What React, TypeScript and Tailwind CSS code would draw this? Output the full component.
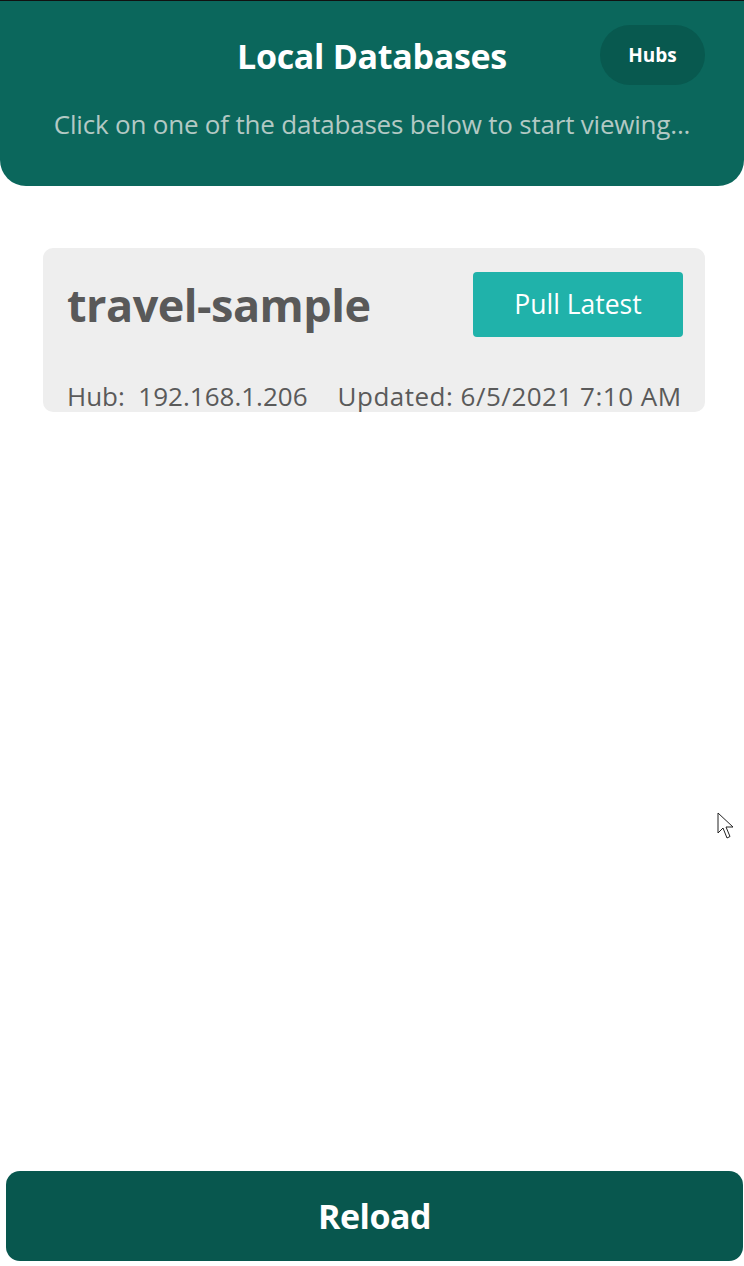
const font = { fontFamily: '"Open Sans", "Noto Sans", sans-serif' };

function Cursor() {
  return (
    <svg className="absolute left-[717px] top-[812px]" width="20" height="28" viewBox="0 0 20 28">
      <path d="M1 1 L1 21 L6 16 L10 26 L13 24.5 L9 15 L16 15 Z" fill="white" stroke="#222" strokeWidth="1" strokeLinejoin="round" />
    </svg>
  );
}

export default function App() {
  return (
    <div className="relative flex h-[1266px] w-[744px] flex-col bg-white" style={font}>
      <header className="border-t border-[#111] bg-[#0b675c] rounded-b-[26px] h-[186px] px-[40px] pt-[24px]">
        <div className="relative flex h-[62px] items-center justify-center">
          <h1 className="text-[34px] font-bold text-white tracking-[-0.3px]">Local Databases</h1>
          <button className="absolute right-[-1px] top-0 h-[60px] w-[105px] rounded-full bg-[#08594f] text-[19px] font-bold text-white">
            Hubs
          </button>
        </div>
        <p className="mt-[18px] text-center text-[26px] text-[#b3c9c4] tracking-[-0.2px]">
          Click on one of the databases below to start viewing...
        </p>
      </header>

      <main className="flex-1 pl-[43px] pr-[39px] pt-[62px]">
        <div className="rounded-[10px] bg-[#eeeeee] pl-[24px] pr-[22px] pt-[23px] h-[164px]">
          <div className="flex items-center justify-between">
            <h2 className="text-[45px] font-bold text-[#595959] tracking-[-0.5px]">travel-sample</h2>
            <button className="h-[65px] w-[210px] rounded-[4px] bg-[#20b2aa] text-[26.5px] text-white">
              Pull Latest
            </button>
          </div>
          <div className="mt-[42px] flex gap-[30px] text-[26px] leading-[30px] text-[#5a5a5a]">
            <span>Hub:&nbsp; 192.168.1.206</span>
            <span className="tracking-[0.5px]">Updated: 6/5/2021 7:10 AM</span>
          </div>
        </div>
      </main>

      <div className="pb-[5px] pl-[6px] pr-[1px]">
        <button className="flex h-[90px] w-full items-center justify-center rounded-[14px] bg-[#08574e] text-[34px] font-bold text-white tracking-[-0.5px]">
          Reload
        </button>
      </div>

      <Cursor />
    </div>
  );
}
